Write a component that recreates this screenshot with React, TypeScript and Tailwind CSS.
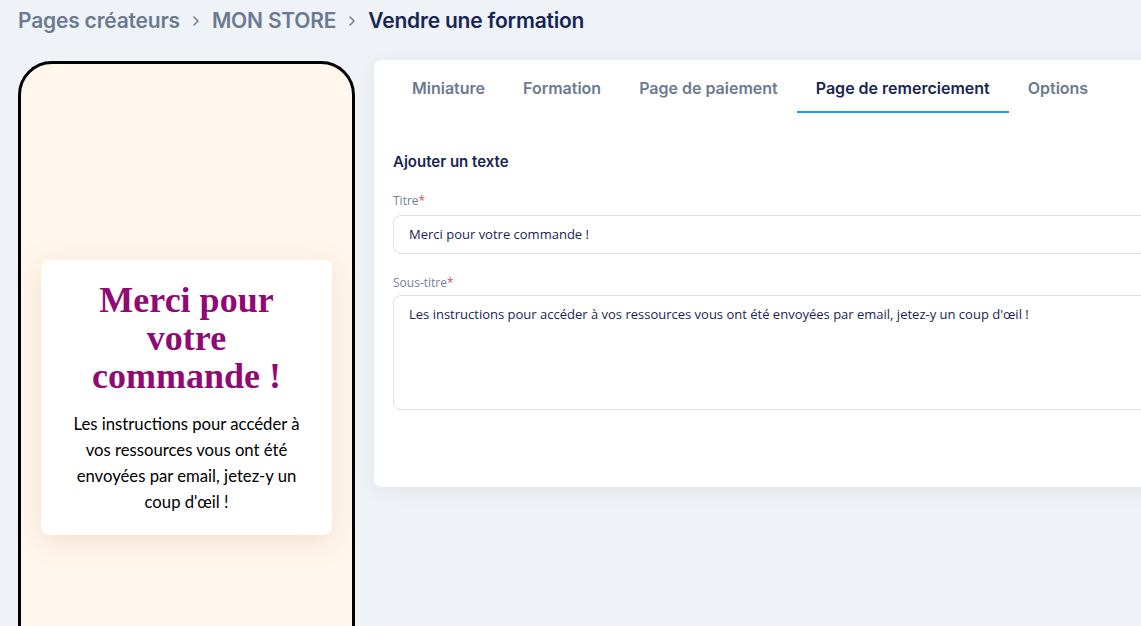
import { ChevronRight } from "lucide-react";

const tabs = ["Miniature", "Formation", "Page de paiement", "Page de remerciement", "Options"];

function Breadcrumb() {
  return (
    <div className="flex items-center h-[40px] pt-[1px] pl-[18px] text-[21px] font-semibold font-['Inter',sans-serif] tracking-[-0.2px]">
      <span className="text-[#6c7a91]">Pages créateurs</span>
      <ChevronRight className="mx-[8px] w-[16px] h-[16px] text-[#6c7a91]" strokeWidth={2.2} />
      <span className="text-[#6c7a91]">MON STORE</span>
      <ChevronRight className="mx-[8px] w-[16px] h-[16px] text-[#6c7a91]" strokeWidth={2.2} />
      <span className="text-[#172554]">Vendre une formation</span>
    </div>
  );
}

function PhonePreview() {
  return (
    <div className="shrink-0 w-[337px] h-[620px] mt-[1px] border-[3px] border-black rounded-[34px] bg-[#fff7ec] px-[20px] pt-[196px]">
      <div className="bg-white rounded-[8px] shadow-[0_6px_28px_rgba(170,120,70,0.18)] px-[24px] pt-[21px] pb-[20px] text-center">
        <h1 className="font-['Liberation_Serif',serif] font-bold text-[36px] leading-[38px] text-[#900a76]">
          Merci pour votre commande !
        </h1>
        <p className="mt-[16px] font-['Lato',sans-serif] text-[16.7px] leading-[26px] text-black">
          Les instructions pour accéder à vos ressources vous ont été envoyées par email, jetez-y un coup d'œil !
        </p>
      </div>
    </div>
  );
}

function Field({ label, value, tall }: { label: string; value: string; tall?: boolean }) {
  return (
    <div>
      <div className="text-[12px] leading-[16px] text-[#74809a]">
        {label}
        <span className="text-[#e14a5a]">*</span>
      </div>
      <div
        className={
          tall
            ? "mt-[4px] h-[115px] border border-[#dfe3e8] rounded-[8px] pl-[15px] pt-[9px] text-[13px] leading-[18px] text-[#172554]"
            : "mt-[6px] h-[39px] flex items-center border border-[#dfe3e8] rounded-[8px] pl-[15px] text-[13px] text-[#172554]"
        }
      >
        {value}
      </div>
    </div>
  );
}

function EditorCard() {
  return (
    <div className="shrink-0 w-[820px] h-[427px] bg-white rounded-[8px] shadow-[0_4px_20px_rgba(30,40,60,0.07)] px-[19px]">
      <div className="flex font-['Inter',sans-serif] font-semibold text-[16px]">
        {tabs.map((t) => (
          <div
            key={t}
            className={
              t === "Page de remerciement"
                ? "px-[19px] pt-[16px] pb-[11px] leading-[24px] text-[#172554] border-b-2 border-[#0ea2ea]"
                : "px-[19px] pt-[16px] pb-[11px] leading-[24px] text-[#6c7a91] border-b-2 border-transparent"
            }
          >
            {t}
          </div>
        ))}
      </div>
      <div className="font-['Open_Sans',sans-serif]">
        <h2 className="mt-[39px] font-['Inter',sans-serif] font-semibold text-[15px] leading-[20px] text-[#172554]">
          Ajouter un texte
        </h2>
        <div className="mt-[21px] flex flex-col gap-[21px]">
          <Field label="Titre" value="Merci pour votre commande !" />
          <Field
            label="Sous-titre"
            value="Les instructions pour accéder à vos ressources vous ont été envoyées par email, jetez-y un coup d'œil !"
            tall
          />
        </div>
      </div>
    </div>
  );
}

export default function App() {
  return (
    <div className="w-[1141px] h-[626px] overflow-hidden bg-[#eff3f8]">
      <Breadcrumb />
      <div className="flex items-start gap-[19px] pl-[18px] pt-[20px]">
        <PhonePreview />
        <EditorCard />
      </div>
    </div>
  );
}
